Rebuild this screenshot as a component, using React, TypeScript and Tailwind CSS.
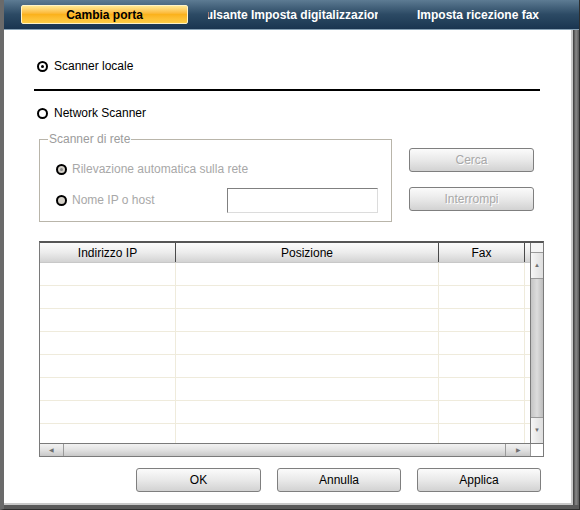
import React from "react";

const Radio = ({ checked, disabled }: { checked?: boolean; disabled?: boolean }) => (
  <span
    className={`inline-flex items-center justify-center w-[11px] h-[11px] rounded-full border-2 border-black ${
      disabled ? "bg-[#d4d0c8]" : "bg-white"
    }`}
  >
    {checked && (
      <span className={`w-[3px] h-[3px] rounded-full ${disabled ? "bg-[#8a8a8a]" : "bg-black"}`}></span>
    )}
  </span>
);

const Btn = ({ label, disabled, w }: { label: string; disabled?: boolean; w: string }) => (
  <div
    className={`${w} h-[24px] flex items-center justify-center rounded-[3px] border border-[#7f7f7f] bg-gradient-to-b from-[#fbfbfb] via-[#e9e9e9] to-[#d2d2d2] text-[12px] ${
      disabled ? "text-[#a8a8a8] [text-shadow:1px_1px_0_#ffffff]" : "text-black"
    }`}
  >
    {label}
  </div>
);

const rows = [0, 1, 2, 3, 4, 5, 6, 7];

export default function App() {
  return (
    <div className="w-[580px] h-[510px] flex flex-col bg-[#5c5c5c] border-l-[4px] border-r-[1px] border-b-[1px] border-l-[#6a6a6a] border-r-[#2e2e2e] border-b-[#2e2e2e] font-['Liberation_Sans',Arial,sans-serif] overflow-hidden">
      {/* tab bar */}
      <div className="h-[30px] flex items-start bg-gradient-to-b from-[#5d7b93] via-[#2c4a64] to-[#1a3550] border-b border-[#8aa3b6] -mr-[1px]">
        <div className="ml-[17px] mt-[5px] w-[167px] h-[19px] flex items-center justify-center rounded-[2px] border border-[#fff3c8] bg-gradient-to-b from-[#ffe890] via-[#fbb21c] to-[#ffce45] text-[12px] font-bold text-black">
          Cambia porta
        </div>
        <div className="ml-[20px] mt-[5px] w-[170px] h-[19px] flex items-center justify-center overflow-hidden whitespace-nowrap text-[12px] font-bold text-white">
          Pulsante Imposta digitalizzazione
        </div>
        <div className="ml-[39px] mt-[5px] w-[155px] h-[19px] flex items-center justify-start whitespace-nowrap text-[12px] font-bold text-white">
          Imposta ricezione fax
        </div>
      </div>

      {/* body */}
      <div className="flex-1 flex">
        <div className="flex-1 flex flex-col bg-white border-r-[2px] border-b-[2px] border-r-[#c9c9c9] border-b-[#c9c9c9] pl-[30px] text-[12px] text-black">
          <div className="mt-[29px] h-[14px] flex items-center gap-[6px] pl-[3px]">
            <Radio checked />
            <span>Scanner locale</span>
          </div>
          <div className="mt-[16px] w-[506px] h-[2px] bg-black"></div>
          <div className="mt-[15px] h-[14px] flex items-center gap-[6px] pl-[3px]">
            <Radio />
            <span>Network Scanner</span>
          </div>

          <div className="mt-[12px] flex">
            <fieldset className="ml-[5px] w-[353px] h-[90px] border border-[#b9b5aa] pl-[16px] pr-[13px] pt-[0px]">
              <legend className="ml-[-8px] px-[1px] text-[#9c9c9c] leading-[14px]">Scanner di rete</legend>
              <div className="mt-[16px] h-[14px] flex items-center gap-[5px] text-[#a8a8a8]">
                <Radio checked disabled />
                <span>Rilevazione automatica sulla rete</span>
              </div>
              <div className="mt-[12px] h-[24px] flex items-center gap-[5px] text-[#a8a8a8]">
                <Radio disabled />
                <span>Nome IP o host</span>
                <div className="ml-auto w-[151px] h-[25px] border border-t-[#808080] border-l-[#808080] border-r-[#dcdcdc] border-b-[#dcdcdc] bg-white"></div>
              </div>
            </fieldset>
            <div className="ml-[17px] mt-[16px] flex flex-col gap-[15px]">
              <Btn label="Cerca" disabled w="w-[125px]" />
              <Btn label="Interrompi" disabled w="w-[125px]" />
            </div>
          </div>

          {/* table */}
          <div className="mt-[19px] ml-[5px] w-[505px] h-[216px] flex flex-col border border-[#7a7a7a] border-t-[2px] border-t-[#555555]">
            <div className="flex-1 flex overflow-hidden">
              <div className="w-[490px] flex flex-col">
                <div className="h-[20px] shrink-0 flex bg-gradient-to-b from-[#fbfbfb] via-[#ececec] to-[#d3d3d3] border-b border-[#c8c8c8]">
                  <div className="w-[136px] flex items-center justify-center border-r border-[#4a4a4a]">Indirizzo IP</div>
                  <div className="w-[263px] flex items-center justify-center border-r border-[#4a4a4a]">Posizione</div>
                  <div className="w-[86px] flex items-center justify-center border-r border-[#4a4a4a]">Fax</div>
                  <div className="flex-1"></div>
                </div>
                {rows.map((r) => (
                  <div key={r} className="h-[23px] shrink-0 flex border-b border-[#efebdc]">
                    <div className="w-[136px] border-r border-[#efebdc]"></div>
                    <div className="w-[263px] border-r border-[#efebdc]"></div>
                    <div className="w-[86px] border-r border-[#efebdc]"></div>
                    <div className="flex-1"></div>
                  </div>
                ))}
              </div>
              {/* vertical scrollbar */}
              <div className="w-[13px] flex flex-col border-l border-[#7a7a7a] bg-gradient-to-r from-[#c4c4c4] via-[#dcdcdc] to-[#bdbdbd]">
                <div className="h-[10px] bg-[#f4f4f4] border-b border-[#9a9a9a]"></div>
                <div className="h-[26px] flex items-center justify-center bg-gradient-to-r from-[#f6f6f6] to-[#dedede] border-b border-[#9a9a9a] text-[6px] text-[#707070]">
                  ▲
                </div>
                <div className="flex-1"></div>
                <div className="h-[26px] flex items-center justify-center bg-gradient-to-r from-[#f6f6f6] to-[#dedede] border-t border-[#9a9a9a] text-[6px] text-[#707070]">
                  ▼
                </div>
              </div>
            </div>
            {/* horizontal scrollbar */}
            <div className="h-[13px] flex border-t border-[#7a7a7a] bg-gradient-to-b from-[#f2f2f2] via-[#e2e2e2] to-[#c8c8c8]">
              <div className="w-[24px] flex items-center justify-center border-r border-[#9a9a9a] text-[6px] text-[#707070]">◀</div>
              <div className="flex-1"></div>
              <div className="w-[25px] flex items-center justify-center border-l border-[#9a9a9a] text-[6px] text-[#707070]">▶</div>
              <div className="w-[13px] bg-white border-l border-[#9a9a9a]"></div>
            </div>
          </div>

          <div className="mt-[11px] ml-[102px] flex gap-[16px]">
            <Btn label="OK" w="w-[125px]" />
            <Btn label="Annulla" w="w-[124px]" />
            <Btn label="Applica" w="w-[124px]" />
          </div>
        </div>
        <div className="w-[6px] bg-gradient-to-r from-[#3a3a3a] via-[#8a8a8a] to-[#5a5a5a]"></div>
      </div>
      <div className="h-[4px] bg-[#5a5a5a]"></div>
    </div>
  );
}
